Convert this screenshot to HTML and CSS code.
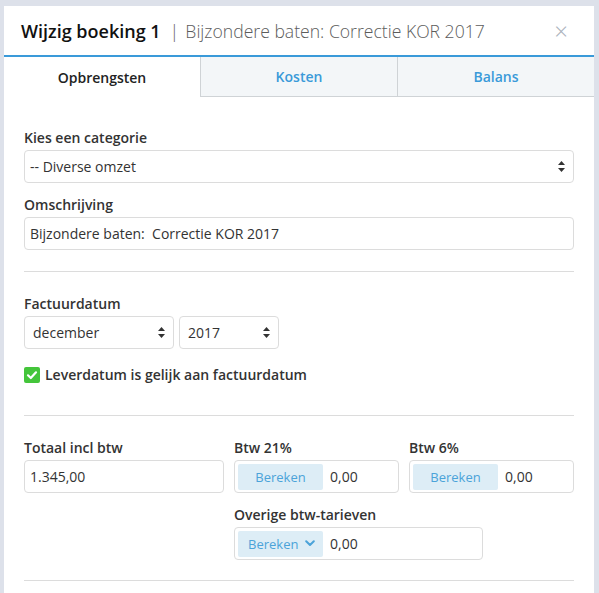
FILE: index.html
```html
<!DOCTYPE html>
<html lang="nl">
<head>
<meta charset="utf-8">
<title>Wijzig boeking 1</title>
<link rel="stylesheet" href="styles.css">
</head>
<body>
<div class="modal">
  <header class="modal-header">
    <h1 class="title"><span class="title-main">Wijzig boeking 1</span><span class="title-sep">|</span><span class="title-sub">Bijzondere baten: Correctie KOR 2017</span></h1>
    <span class="close">&#215;</span>
  </header>
  <nav class="tabs">
    <div class="tab active">Opbrengsten</div>
    <div class="tab">Kosten</div>
    <div class="tab">Balans</div>
  </nav>
  <div class="modal-body">
    <div class="group">
      <div class="label">Kies een categorie</div>
      <div class="control select"><span class="select-text">-- Diverse omzet</span><svg class="updown" width="7" height="11" viewBox="0 0 7 11"><path d="M3.5 0 L7 4 L0 4 Z M0 7 L7 7 L3.5 11 Z" fill="#333"/></svg></div>
    </div>
    <div class="group">
      <div class="label">Omschrijving</div>
      <div class="control">Bijzondere baten:&nbsp; Correctie KOR 2017</div>
    </div>
    <hr class="sep first">
    <div class="group">
      <div class="label">Factuurdatum</div>
      <div class="date-row">
        <div class="control select month"><span class="select-text">december</span><svg class="updown" width="7" height="11" viewBox="0 0 7 11"><path d="M3.5 0 L7 4 L0 4 Z M0 7 L7 7 L3.5 11 Z" fill="#333"/></svg></div>
        <div class="control select year"><span class="select-text">2017</span><svg class="updown" width="7" height="11" viewBox="0 0 7 11"><path d="M3.5 0 L7 4 L0 4 Z M0 7 L7 7 L3.5 11 Z" fill="#333"/></svg></div>
      </div>
    </div>
    <div class="check-row">
      <span class="checkbox"><svg width="16" height="16" viewBox="0 0 16 16"><path d="M4 8.3 L6.8 11 L12 5.3" fill="none" stroke="#fff" stroke-width="2.2" stroke-linecap="round" stroke-linejoin="round"/></svg></span>
      <span class="check-label">Leverdatum is gelijk aan factuurdatum</span>
    </div>
    <hr class="sep">
    <div class="amount-grid">
      <div class="group">
        <div class="label">Totaal incl btw</div>
        <div class="control">1.345,00</div>
      </div>
      <div class="group">
        <div class="label">Btw 21%</div>
        <div class="control addon"><span class="calc">Bereken</span><span class="addon-value">0,00</span></div>
      </div>
      <div class="group">
        <div class="label">Btw 6%</div>
        <div class="control addon"><span class="calc">Bereken</span><span class="addon-value">0,00</span></div>
      </div>
      <div class="group other">
        <div class="label">Overige btw-tarieven</div>
        <div class="control addon wide"><span class="calc dropdown">Bereken<svg width="10" height="7" viewBox="0 0 10 7"><path d="M1.2 1.2 L5 5 L8.8 1.2" fill="none" stroke="#4ba3d9" stroke-width="2" stroke-linecap="round" stroke-linejoin="round"/></svg></span><span class="addon-value">0,00</span></div>
      </div>
    </div>
    <hr class="sep last">
  </div>
</div>
</body>
</html>
```

FILE: styles.css
```css
* { box-sizing: border-box; }
html, body { height: 100%; }
body {
  margin: 0;
  padding: 6px 5px 0 4px;
  background: #dde1ea;
  font-family: "Open Sans", "Noto Sans", sans-serif;
  color: #333;
  overflow: hidden;
}
.modal {
  background: #fff;
  min-height: 700px;
}
.modal-header {
  height: 51px;
  border-bottom: 2px solid #3a9ad9;
  display: flex;
  align-items: center;
  padding: 0 26px 0 17px;
}
.title {
  margin: 0;
  flex: 1;
  font-size: 18px;
  font-weight: 400;
  line-height: 22px;
  white-space: nowrap;
}
.title-main { font-weight: 600; color: #111; }
.title-sep { color: #666; margin: 0 6px 0 9px; font-weight: 300; }
.title-sub { color: #5c5c5c; font-weight: 300; font-size: 17.6px; }
.close {
  color: #a9b2bc;
  font-size: 24px;
  line-height: 20px;
  font-weight: 300;
}
.tabs {
  display: grid;
  grid-template-columns: 196px 197px 197px;
  height: 40px;
}
.tab {
  display: flex;
  align-items: center;
  justify-content: center;
  font-size: 14px;
  font-weight: 600;
  color: #3a9ad9;
  background: #f3f6f8;
  border-left: 1px solid #cfd3d6;
  border-bottom: 1px solid #cfd3d6;
}
.tab.active {
  background: #fff;
  color: #222;
  border-left: 0;
  border-bottom: 0;
}
.modal-body {
  padding: 31px 20px 0 20px;
}
.group { margin-bottom: 12px; }
.label {
  font-size: 14px;
  font-weight: 600;
  line-height: 20px;
  margin-bottom: 2px;
  color: #333;
  white-space: nowrap;
}
.control {
  height: 33px;
  border: 1px solid #dcdcdc;
  border-radius: 4px;
  font-size: 14px;
  line-height: 20px;
  padding: 0 5px;
  display: flex;
  align-items: center;
  color: #333;
}
.select { justify-content: space-between; padding-right: 8px; }
.updown { flex: none; }
.date-row { display: flex; gap: 5px; }
.month { width: 150px; padding-left: 8px; }
.year { width: 100px; padding-left: 8px; }
.sep {
  border: 0;
  border-top: 1px solid #dcdcdc;
  margin: 20px 0 22px;
  height: 0;
}
.sep.first { margin-top: 21px; }
.check-row {
  display: flex;
  align-items: center;
  gap: 5px;
  margin-top: 16px;
  margin-bottom: 30px;
  height: 20px;
}
.checkbox {
  width: 16px;
  height: 16px;
  border-radius: 2px;
  background: #44c53b;
  display: flex;
}
.check-label { font-size: 14px; font-weight: 600; line-height: 20px; }
.amount-grid {
  display: grid;
  grid-template-columns: 200px 165px 165px;
  column-gap: 10px;
}
.amount-grid .group { margin-bottom: 12px; }
.amount-grid .other { grid-column: 2 / 4; margin-bottom: 0; }
.addon { padding: 3px; }
.wide { width: 249px; }
.calc {
  width: 85px;
  height: 26px;
  background: #ddedf6;
  border-radius: 2px;
  color: #4ba3d9;
  font-size: 13px;
  display: flex;
  align-items: center;
  justify-content: center;
  flex: none;
}
.calc.dropdown { justify-content: flex-start; padding-left: 10px; gap: 7px; }
.addon-value { margin-left: 7px; }
.sep.last { margin-top: 20px; }
```
